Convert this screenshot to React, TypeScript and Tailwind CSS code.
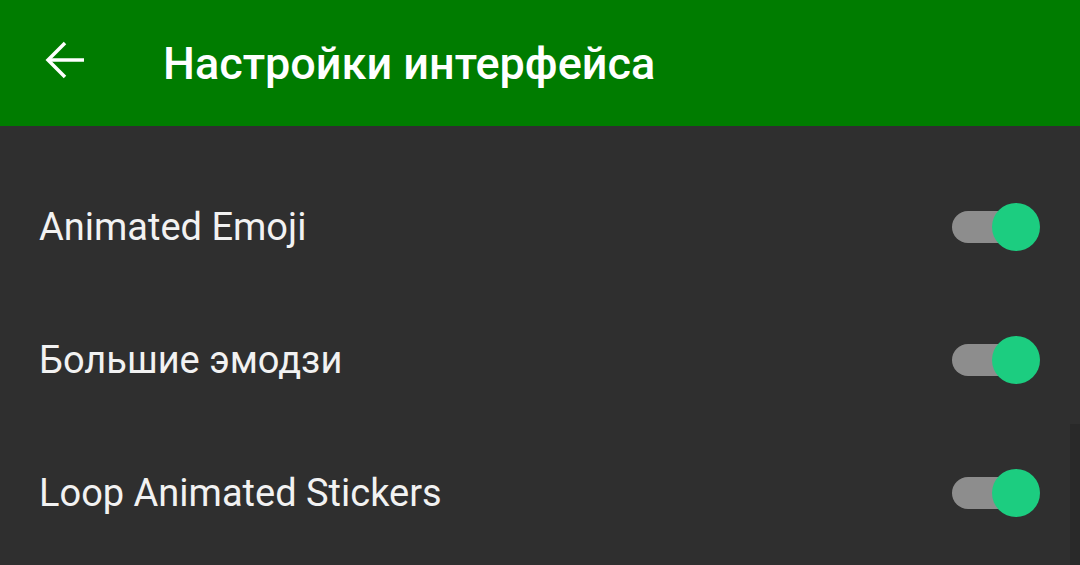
import * as React from "react";

const rows = ["Animated Emoji", "Большие эмодзи", "Loop Animated Stickers"];

function Toggle() {
  return (
    <div className="relative h-[48px] w-[88px]">
      <div className="absolute left-0 top-[8px] h-[32px] w-[76px] rounded-full bg-[#8d8d8d]" />
      <div className="absolute right-0 top-0 h-[48px] w-[48px] rounded-full bg-[#1ccd80]" />
    </div>
  );
}

export default function App() {
  return (
    <div
      className="relative flex h-[565px] w-[1080px] flex-col overflow-hidden bg-[#2f2f2f]"
      style={{ fontFamily: "Roboto, 'Noto Sans', sans-serif" }}
    >
      <div className="flex h-[126px] shrink-0 items-center bg-[#007c00] pl-[41px]">
        <svg className="mb-[6px]" width="48" height="48" viewBox="0 0 24 24" fill="none" stroke="#ffffff" strokeWidth="1.75">
          <path d="M21.5 12H4" />
          <path d="M12 3.5L3.5 12l8.5 8.5" />
        </svg>
        <span className="ml-[74px] text-[45px] font-medium leading-none text-white">Настройки интерфейса</span>
      </div>
      <div className="flex flex-col pt-[34px]">
        {rows.map((r) => (
          <div key={r} className="flex h-[133px] items-center justify-between pl-[39px] pr-[40px]">
            <span className="text-[38px] leading-none text-[#f2f2f2]">{r}</span>
            <Toggle />
          </div>
        ))}
      </div>
      <div className="absolute bottom-0 right-0 top-[424px] w-[10px] bg-[#292929]" />
    </div>
  );
}
